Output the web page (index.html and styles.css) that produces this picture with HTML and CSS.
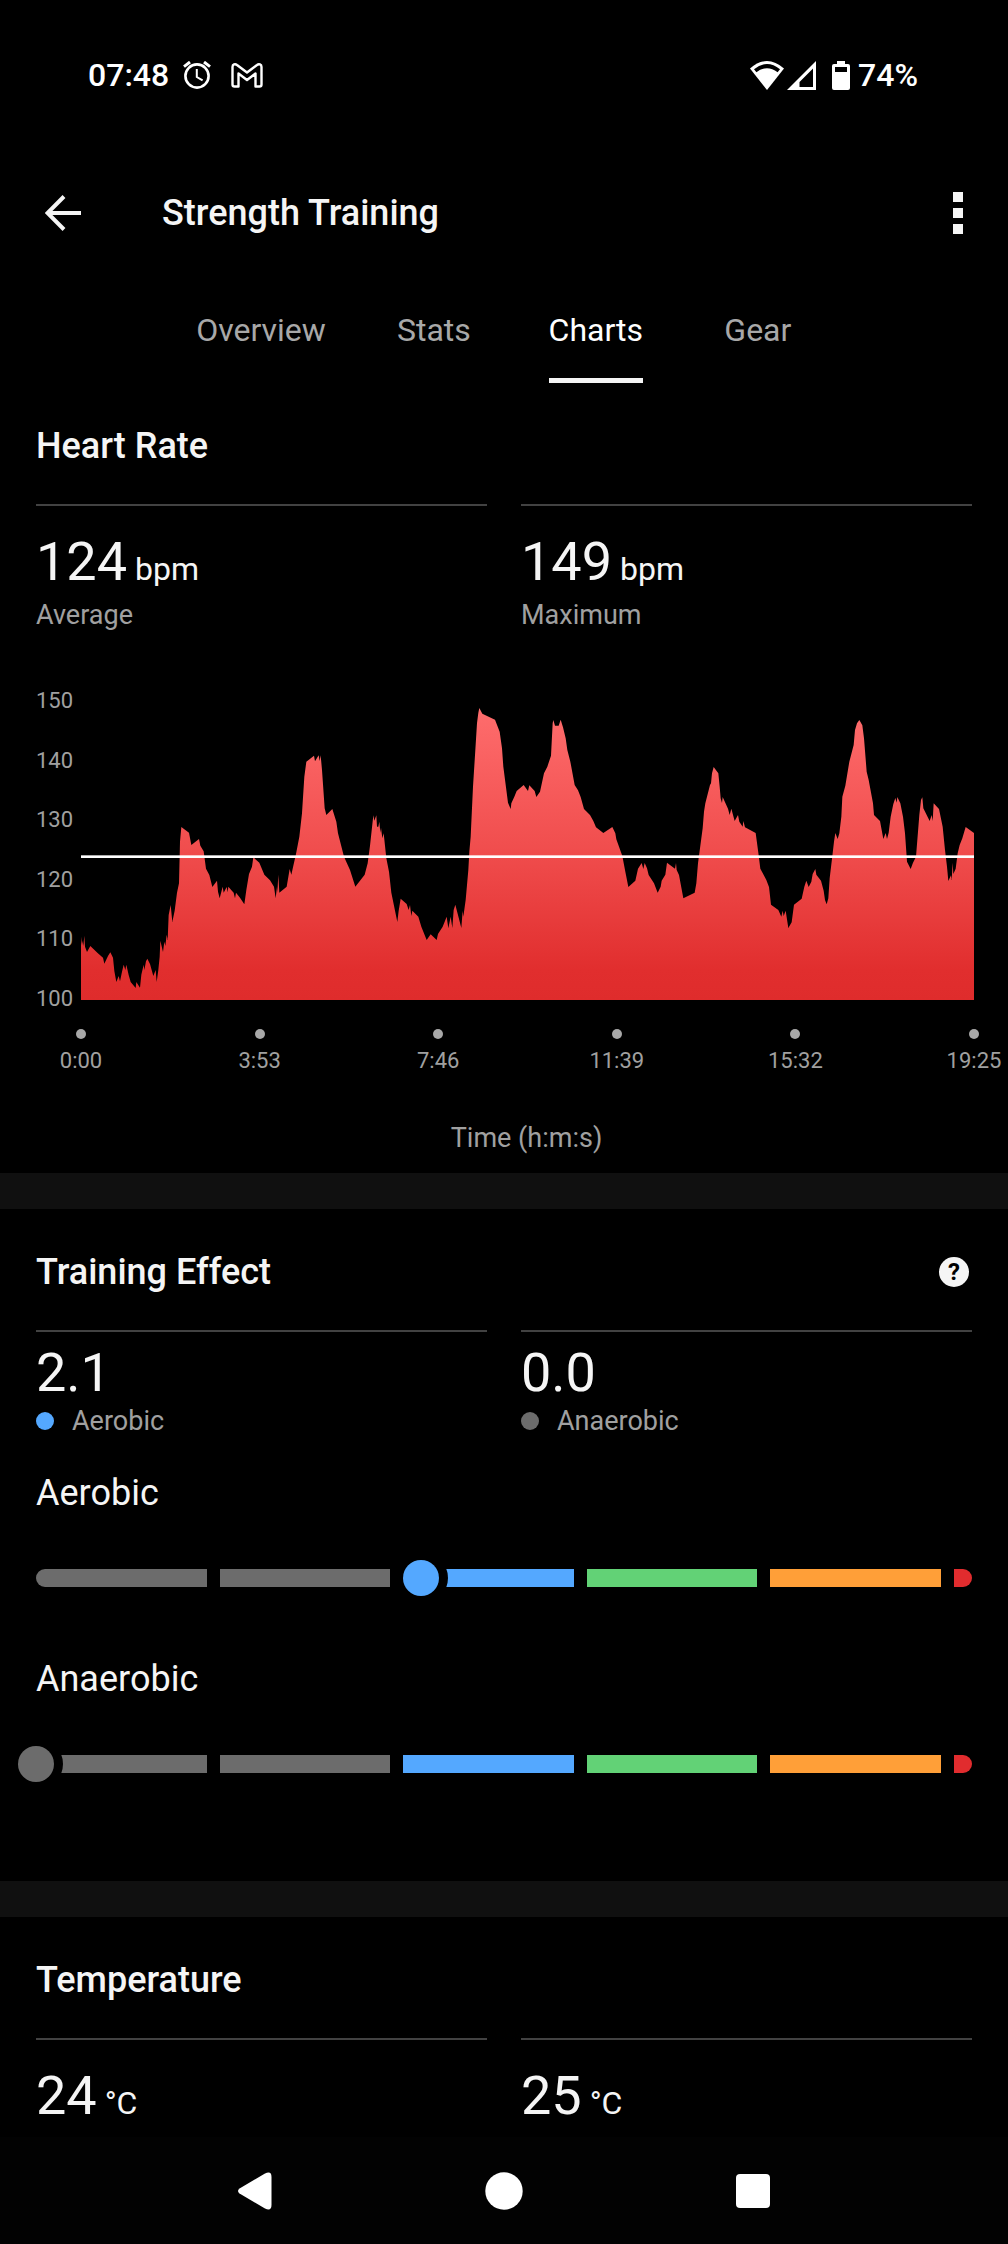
FILE: index.html
```html
<!DOCTYPE html>
<html lang="en">
<head>
  <meta charset="UTF-8">
  <meta name="viewport" content="width=device-width, initial-scale=1.0">
  <title>Strength Training</title>
  <link rel="stylesheet" href="styles.css">
</head>
<body>
  <div class="status-bar">
    <div class="status-left">
      <span>07:48</span>
      <svg width="28" height="28" viewBox="0 0 28 28" fill="none" stroke="#fff">
        <circle cx="14" cy="15" r="11.6" stroke-width="2.6"/>
        <path d="M1 5.6 7 1M27 5.6 21 1" stroke-width="3"/>
        <path d="M13.8 8v8l5.8 3.4" stroke-width="2"/>
      </svg>
      <svg class="mail" width="32" height="25" viewBox="0 0 32 25" fill="none" stroke="#fff" stroke-width="2.4" stroke-linejoin="round">
        <path d="M1.5 4v17.5q0 2 2 2h4V10.5L16 17l8.500-6.500v13h4q2 0 2-2V4c0-2.700-2.600-3.500-4.500-2L16 9.500 6 2C4.100.500 1.500 1.300 1.500 4z"/>
      </svg>
    </div>
    <div class="status-right">
      <svg width="34" height="29" viewBox="0 0 34 29">
        <path d="M0 7.500Q17-7.500 34 7.500L17 29z" fill="#fff"/>
        <path d="M4 8.200Q17-2.200 30 8.200L27.600 11.200Q17 3.200 6.400 11.200z" fill="#000"/>
      </svg>
      <svg width="29" height="29" viewBox="0 0 29 29">
        <path fill="#fff" fill-rule="evenodd" d="M29 0v29H0zM26 7.500 12.500 21v5H26z"/>
      </svg>
      <svg class="battery" width="18" height="29" viewBox="0 0 18 29">
        <path fill="#fff" fill-rule="evenodd" d="M5 0h8v3h3q2 0 2 2v22q0 2-2 2H2q-2 0-2-2V5q0-2 2-2h3zM3 6v5h12V6z"/>
      </svg>
      <span>74%</span>
    </div>
  </div>

  <header class="app-bar">
    <button class="icon-btn" aria-label="Back">
      <svg width="36" height="36" viewBox="0 0 36 36" fill="none" stroke="#f5f5f5" stroke-width="4">
        <path d="M36 18H3M19 1.500 2.500 18 19 34.500"/>
      </svg>
    </button>
    <h1>Strength Training</h1>
    <button class="icon-btn" aria-label="More options">
      <svg width="10" height="42" viewBox="0 0 10 42" fill="#f5f5f5">
        <path d="M0 0h10v10H0zM0 16h10v10H0zM0 32h10v10H0z"/>
      </svg>
    </button>
  </header>

  <nav class="tabs">
    <a href="#"><span>Overview</span></a>
    <a href="#"><span>Stats</span></a>
    <a href="#" class="active"><span>Charts</span></a>
    <a href="#"><span>Gear</span></a>
  </nav>

  <main>
    <section class="card heart">
      <h2>Heart Rate</h2>
      <div class="stats">
        <div class="stat">
          <div class="value">124<span class="unit"> bpm</span></div>
          <div class="label">Average</div>
        </div>
        <div class="stat">
          <div class="value">149<span class="unit"> bpm</span></div>
          <div class="label">Maximum</div>
        </div>
      </div>

      <div class="chart">
        <div class="y-axis">
          <span>150</span>
          <span>140</span>
          <span>130</span>
          <span>120</span>
          <span>110</span>
          <span>100</span>
        </div>
        <div class="plot">
          <svg viewBox="0 0 2679 894" preserveAspectRatio="none">
            <defs>
              <linearGradient id="hr" x1="0" y1="0" x2="0" y2="894" gradientUnits="userSpaceOnUse">
                <stop offset="0" stop-color="#ff6e6e"/>
                <stop offset="0.5" stop-color="#f04d4d"/>
                <stop offset="0.9" stop-color="#e12e2e"/>
                <stop offset="1" stop-color="#df2c2c"/>
              </linearGradient>
            </defs>
            <polygon fill="url(#hr)" points="0,894 0,704 3,730 5,716 7,732 10,701 12,734 18,750 28,732 49,752 66,767 70,785 81,762 88,751 96,767 100,807 106,840 113,822 117,838 123,809 128,788 133,804 136,788 143,819 149,840 164,858 166,840 177,857 181,818 188,788 190,804 195,778 199,770 207,786 217,822 224,804 227,840 232,804 236,764 238,716 246,750 250,719 253,732 257,698 260,714 263,639 269,609 274,660 281,626 288,572 294,544 297,419 301,375 324,392 331,429 354,411 358,431 368,448 375,500 385,519 394,555 408,536 411,569 416,589 425,554 428,572 437,555 440,571 442,554 458,572 462,589 465,572 477,587 490,607 496,564 504,516 513,494 517,466 535,482 550,518 567,535 579,554 584,589 588,554 589,572 592,518 595,572 617,554 626,501 631,518 639,482 645,456 655,404 663,334 670,224 676,179 699,161 702,178 713,160 716,177 719,160 723,204 731,319 736,339 754,321 766,359 771,394 789,464 807,504 823,554
              851,518 860,484 867,431 877,340 880,356 886,340 888,374 892,374 895,359 898,392 900,377 904,409 908,394 916,469 924,509 931,572 949,660 953,626 959,590 977,606 983,624 987,609 991,642 994,626 1012,644 1021,674 1037,714 1049,697 1067,714 1071,696 1085,674 1097,644 1102,679 1109,644 1114,678 1118,624 1123,608 1141,678 1145,626 1147,644 1154,594 1162,504 1165,449 1169,404 1176,254 1183,144 1188,64 1192,32 1195,18 1204,35 1242,53 1256,89 1263,139 1267,194 1281,302 1289,321 1291,304 1300,284 1307,267 1328,249 1341,267 1345,250 1361,267 1366,285 1377,269 1389,214 1399,194 1410,161 1415,64 1417,54 1422,71 1433,71 1439,53 1446,76 1454,109 1459,144 1468,179 1481,249 1491,265 1499,285 1509,321 1527,339 1537,357 1545,376 1567,393 1594,375 1603,394 1606,412 1624,462 1633,509 1642,555 1663,536 1671,500 1682,483 1687,501 1691,483 1698,499 1703,519 1719,544 1730,572 1739,554 1742,536 1753,518 1758,482 1782,500 1785,483
              1787,504 1794,519 1807,589 1841,572 1846,544 1851,484 1865,379 1869,329 1873,304 1887,249 1890,244 1893,214 1898,195 1912,214 1916,254 1919,289 1923,303 1925,285 1941,320 1946,339 1951,320 1961,357 1971,339 1975,359 1985,374 1987,357 1992,376 2024,393 2033,460 2038,500 2056,534 2064,555 2070,608 2092,624 2101,644 2105,626 2108,642 2114,626 2122,678 2132,661 2139,608 2162,590 2170,554 2176,536 2183,555 2191,539 2195,516 2203,501 2206,518 2220,536 2228,566 2232,594 2237,607 2242,589 2246,529 2255,454 2259,419 2263,393 2270,411 2275,394 2281,344 2284,284 2293,251 2305,179 2318,129 2322,84 2328,64 2335,54 2344,70 2349,109 2357,209 2363,234 2376,304 2379,339 2397,357 2407,411 2414,393 2418,411 2423,392 2429,344 2437,306 2443,288 2447,302 2449,285 2458,304 2466,344 2472,394 2478,479 2489,501 2496,482 2505,464 2515,339 2520,294 2524,286 2527,319 2546,357 2552,339 2555,357 2558,304 2574,321 2585,374 2592,444 2598,494 2602,537 2610,520 2612,534 2615,482 2617,516 2624,500 2630,454 2636,429 2644,409 2654,375 2679,393 2679,894"/>
            <rect x="0" y="460" width="2679" height="8" fill="#fff"/>
          </svg>
        </div>
      </div>
      <div class="x-axis">
        <div class="tick"><i></i>0:00</div>
        <div class="tick"><i></i>3:53</div>
        <div class="tick"><i></i>7:46</div>
        <div class="tick"><i></i>11:39</div>
        <div class="tick"><i></i>15:32</div>
        <div class="tick"><i></i>19:25</div>
      </div>
      <div class="axis-title">Time (h:m:s)</div>
    </section>

    <section class="card effect">
      <div class="card-head">
        <h2>Training Effect</h2>
        <button class="help" aria-label="Help">?</button>
      </div>
      <div class="stats">
        <div class="stat">
          <div class="value">2.1</div>
          <div class="label"><i class="dot blue"></i>Aerobic</div>
        </div>
        <div class="stat">
          <div class="value">0.0</div>
          <div class="label"><i class="dot grey"></i>Anaerobic</div>
        </div>
      </div>

      <div class="scale">
        <label for="aerobic">Aerobic</label>
        <div class="track">
          <i class="grey"></i><i class="grey"></i><i class="blue"></i><i class="green"></i><i class="orange"></i><i class="red"></i>
          <input type="range" id="aerobic" class="thumb-blue" min="0" max="5.1" step="0.1" value="2.1">
        </div>
      </div>
      <div class="scale">
        <label for="anaerobic">Anaerobic</label>
        <div class="track">
          <i class="grey"></i><i class="grey"></i><i class="blue"></i><i class="green"></i><i class="orange"></i><i class="red"></i>
          <input type="range" id="anaerobic" class="thumb-grey" min="0" max="5.1" step="0.1" value="0">
        </div>
      </div>
    </section>

    <section class="card temperature">
      <h2>Temperature</h2>
      <div class="stats">
        <div class="stat">
          <div class="value">24<span class="unit"> °C</span></div>
        </div>
        <div class="stat">
          <div class="value">25<span class="unit"> °C</span></div>
        </div>
      </div>
    </section>
  </main>

  <footer class="nav-bar">
    <button aria-label="Back">
      <svg width="34" height="38" viewBox="0 0 34 38" fill="#fff">
        <path d="M1.500 16.500 27 1.500Q33.500-1.500 33.500 5v28q0 6.500-6.500 3.500L1.500 21.500q-3-2.500 0-5z"/>
      </svg>
    </button>
    <button aria-label="Home">
      <svg width="38" height="38" viewBox="0 0 38 38" fill="#fff">
        <circle cx="19" cy="19" r="18.700"/>
      </svg>
    </button>
    <button aria-label="Recent apps">
      <svg width="34" height="34" viewBox="0 0 34 34" fill="#fff">
        <rect width="34" height="34" rx="4"/>
      </svg>
    </button>
  </footer>
</body>
</html>
```

FILE: styles.css
```css
* {
    box-sizing: border-box;
}
body {
    margin: 0;
    min-height: 100vh;
    display: flex;
    flex-direction: column;
    background-color: #000;
    color: #f5f5f5;
    font-family: Roboto, "Liberation Sans", sans-serif;
    overflow-x: hidden;
}
h1, h2 {
    margin: 0;
    font-size: 36px;
    line-height: 40px;
    font-weight: 500;
}
button {
    padding: 0;
    border: 0;
    background: none;
    color: inherit;
    font-family: inherit;
    cursor: pointer;
}
svg {
    display: block;
}

/* system status bar */
.status-bar {
    display: flex;
    justify-content: space-between;
    height: 150px;
    padding: 55px 90px 55px 88px;
    font-size: 32px;
    line-height: 40px;
    font-weight: 500;
    color: #fff;
}
.status-left, .status-right {
    display: flex;
    align-items: center;
}
.status-left {
    gap: 14px;
}
.status-left .mail {
    margin-left: 6px;
}
.status-right {
    gap: 3px;
}
.status-right .battery {
    margin: 0 5px 0 13px;
}

/* title and tabs */
.app-bar {
    display: flex;
    align-items: center;
    height: 126px;
    padding: 0 45px;
}
.app-bar h1 {
    flex: 1;
    margin-left: 81px;
}
.tabs {
    display: flex;
    justify-content: center;
    height: 107px;
    padding-top: 34px;
    font-size: 32px;
    line-height: 40px;
}
.tabs a {
    display: flex;
    justify-content: center;
    min-width: 162px;
    padding: 0 27px;
    color: #a8a8a8;
    text-decoration: none;
}
.tabs .active {
    color: #fff;
}
.tabs .active span {
    border-bottom: 5px solid #f5f5f5;
}

/* cards */
.card {
    padding: 43px 36px 0;
}
.card + .card {
    border-top: 36px solid #101010;
}
.card-head {
    display: flex;
    justify-content: space-between;
    align-items: center;
}
.help {
    width: 30px;
    height: 30px;
    margin-right: 3px;
    border-radius: 50%;
    background-color: #f5f5f5;
    color: #000;
    font-size: 24px;
    line-height: 30px;
    font-weight: 700;
}
.stats {
    display: grid;
    grid-template-columns: 1fr 1fr;
    gap: 34px;
    margin-top: 38px;
}
.stat {
    padding-top: 24px;
    border-top: 2px solid #424242;
}
.value {
    font-size: 54px;
    line-height: 64px;
}
.unit {
    font-size: 32px;
    line-height: 32px;
}
.label {
    display: flex;
    align-items: center;
    gap: 18px;
    margin-top: 5px;
    color: #a0a0a0;
    font-size: 27px;
    line-height: 32px;
}

/* heart rate chart */
.heart {
    padding-bottom: 19px;
}
.chart {
    display: flex;
    margin: 58px -2px 0 0;
}
.y-axis {
    display: flex;
    flex-direction: column;
    justify-content: space-between;
    width: 45px;
    color: #a0a0a0;
    font-size: 22px;
    line-height: 24px;
}
.plot {
    flex: 1;
    padding: 13px 0 11px;
}
.plot svg {
    width: 100%;
    height: 298px;
}
.x-axis {
    display: flex;
    justify-content: space-between;
    margin: 18px -2px 0 45px;
    color: #a0a0a0;
    font-size: 22px;
    line-height: 24px;
}
/* zero width keeps the dots on the ends of the plot */
.tick {
    display: flex;
    flex-direction: column;
    align-items: center;
    width: 0;
}
.tick i {
    width: 10px;
    height: 10px;
    margin-bottom: 10px;
    border-radius: 50%;
    background-color: #a8a8a8;
}
.axis-title {
    margin: 49px 0 0 45px;
    text-align: center;
    color: #a0a0a0;
    font-size: 27px;
    line-height: 32px;
}

/* training effect */
.effect {
    padding-bottom: 108px;
}
.effect .stat {
    padding-top: 9px;
}
.effect .label {
    margin-top: 0;
}
.dot {
    width: 18px;
    height: 18px;
    border-radius: 50%;
}
.blue { background-color: #54a8ff; }
.grey { background-color: #6c6c6c; }
.green { background-color: #62d276; }
.orange { background-color: #ff9f38; }
.red { background-color: #e12c2e; }
.scale {
    margin-top: 36px;
}
.scale + .scale {
    margin-top: 72px;
}
.scale label {
    display: block;
    font-size: 36px;
    line-height: 40px;
}
.track {
    position: relative;
    display: flex;
    gap: 13px;
    height: 18px;
    margin-top: 56px;
}
.track i {
    flex: 1;
}
.track i:first-child {
    border-radius: 9px 0 0 9px;
}
.track .red {
    flex: 0 0 18px;
    border-radius: 0 9px 9px 0;
}
.track input {
    position: absolute;
    top: -9px;
    left: -18px;
    width: calc(100% + 36px);
    height: 36px;
    margin: 0;
    background: none;
    -webkit-appearance: none;
    appearance: none;
}
.track input::-webkit-slider-thumb {
    -webkit-appearance: none;
    width: 36px;
    height: 36px;
    border-radius: 50%;
    box-shadow: 0 0 0 9px #000;
}
.thumb-blue::-webkit-slider-thumb {
    background-color: #54a8ff;
}
.thumb-grey::-webkit-slider-thumb {
    background-color: #6c6c6c;
}

.temperature {
    padding-bottom: 9px;
}

/* system navigation */
.nav-bar {
    display: flex;
    height: 108px;
    margin-top: auto;
    padding: 0 13%;
    background-color: #020202;
}
.nav-bar button {
    flex: 1;
    display: flex;
    justify-content: center;
    align-items: center;
}
```
